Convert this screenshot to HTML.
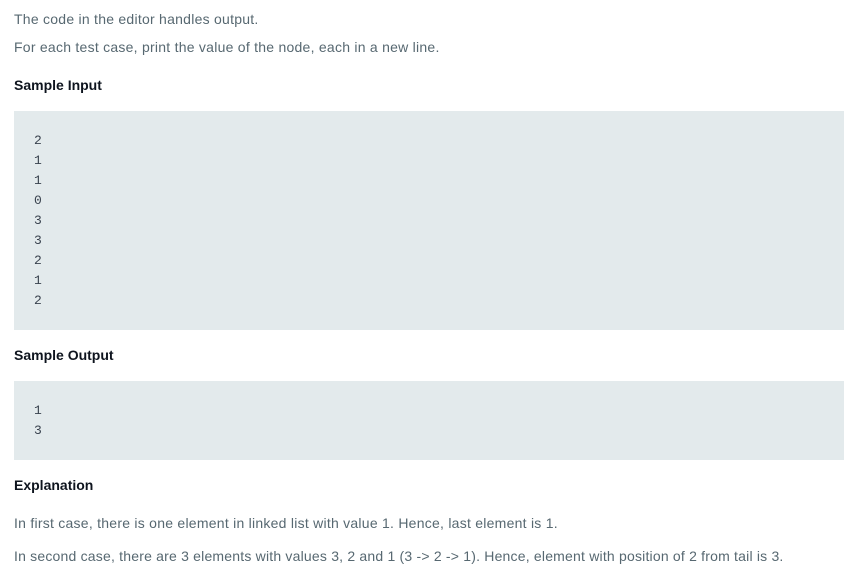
<!DOCTYPE html><html><head><style>
body{margin:0;background:#fff;font-family:"Liberation Sans",sans-serif;color:#576871;font-size:14px;}
.t{position:absolute;left:14px;white-space:nowrap;line-height:20px;letter-spacing:0.25px}
.h{color:#0e141e;font-weight:bold;letter-spacing:0}
.box{position:absolute;left:14px;width:830px;background:#e3eaec;}
.box pre{margin:0;position:absolute;left:20px;font-family:"Liberation Mono",monospace;font-size:13px;line-height:20px;color:#39424e}
</style></head><body>
<div class="t" style="top:9px">The code in the editor handles output.</div>
<div class="t" style="top:37px">For each test case, print the value of the node, each in a new line.</div>
<div class="t h" style="top:75px">Sample Input</div>
<div class="box" style="top:111px;height:219px"><pre style="top:20px">2
1
1
0
3
3
2
1
2</pre></div>
<div class="t h" style="top:345px">Sample Output</div>
<div class="box" style="top:381px;height:79px"><pre style="top:20px">1
3</pre></div>
<div class="t h" style="top:475px">Explanation</div>
<div class="t" style="top:513px">In first case, there is one element in linked list with value 1. Hence, last element is 1.</div>
<div class="t" style="top:546px;letter-spacing:0.2px">In second case, there are 3 elements with values 3, 2 and 1 (3 -&gt; 2 -&gt; 1). Hence, element with position of 2 from tail is 3.</div>
</body></html>
